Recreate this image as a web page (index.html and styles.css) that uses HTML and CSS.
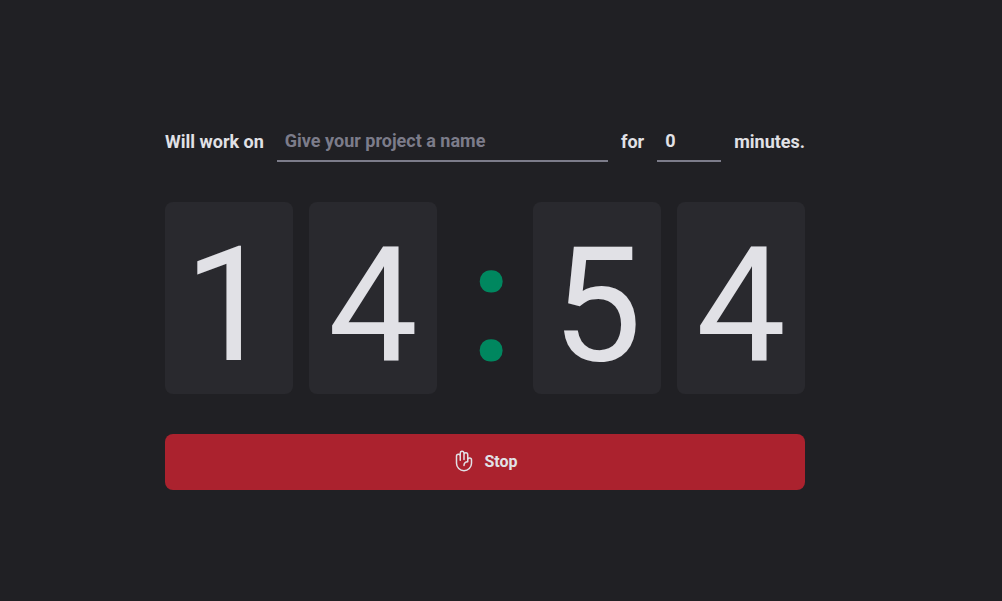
FILE: index.html
```html
<!DOCTYPE html>
<html lang="en">
<head>
<meta charset="utf-8">
<title>Timer</title>
<link rel="stylesheet" href="styles.css">
</head>
<body>
<main class="page">
<form class="timer">
<div class="setup">
<label for="task">Will work on</label>
<input class="field task" id="task" type="text" placeholder="Give your project a name">
<label for="minutes">for</label>
<input class="field minutes" id="minutes" type="text" inputmode="numeric" value="0">
<span>minutes.</span>
</div>
<div class="countdown" role="timer">
<span class="digit">1</span>
<span class="digit">4</span>
<span class="separator">:</span>
<span class="digit">5</span>
<span class="digit">4</span>
</div>
<button class="stop" type="button">
<svg class="icon" viewBox="0 0 256 256" fill="currentColor" aria-hidden="true">
<path d="M188 88a27.8 27.8 0 0 0-12 2.7V60a28 28 0 0 0-41.4-24.6A28 28 0 0 0 80 44v6.7A27.8 27.8 0 0 0 68 48a28.1 28.1 0 0 0-28 28v76a88 88 0 0 0 176 0v-36a28.1 28.1 0 0 0-28-28Zm12 64a72 72 0 0 1-144 0V76a12 12 0 0 1 24 0v44a8 8 0 0 0 16 0V44a12 12 0 0 1 24 0v68a8 8 0 0 0 16 0V60a12 12 0 0 1 24 0v68.7A48 48 0 0 0 120 176a8 8 0 0 0 16 0 32 32 0 0 1 32-32 8 8 0 0 0 8-8v-20a12 12 0 0 1 24 0Z"/>
</svg>
Stop
</button>
</form>
</main>
</body>
</html>
```
FILE: styles.css
```css
* {
  box-sizing: border-box;
}

body {
  margin: 0;
  background: #202024;
  color: #e1e1e6;
  font-family: Roboto, sans-serif;
}

.page {
  min-height: 100vh;
  padding: 120px 32px 64px 0;
}

.timer {
  width: 100%;
  max-width: 640px;
  margin: 0 auto;
  display: flex;
  flex-direction: column;
  gap: 40px;
}

.setup {
  display: flex;
  align-items: center;
  gap: 13px;
  font-size: 18px;
  font-weight: 700;
}

.field {
  height: 42px;
  padding: 0 8px;
  border: 0;
  border-bottom: 2px solid #7c7c8a;
  background: transparent;
  color: inherit;
  font: inherit;
}

.field::placeholder {
  color: #7c7c8a;
}

.task {
  flex: 1;
  min-width: 0;
}

.minutes {
  width: 64px;
}

.countdown {
  display: grid;
  grid-template-columns: 2fr 2fr 1fr 2fr 2fr;
  gap: 16px;
  font-size: 160px;
  line-height: 176px;
  text-align: center;
}

.digit {
  padding-top: 16px;
  border-radius: 8px;
  background: #29292e;
}

.separator {
  padding: 14px 0 0 12px;
  color: #00875f;
  -webkit-text-stroke: 5px #00875f;
}

.stop {
  display: flex;
  align-items: center;
  justify-content: center;
  gap: 8px;
  height: 56px;
  padding: 0 0 2px;
  border: 0;
  border-radius: 8px;
  background: #ab222e;
  color: #e1e1e6;
  font: 700 16px Roboto, sans-serif;
  cursor: pointer;
}

.icon {
  width: 24px;
  height: 24px;
}
```
